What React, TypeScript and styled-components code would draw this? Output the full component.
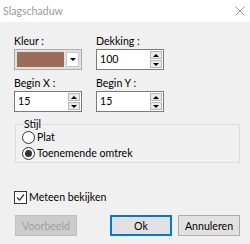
import React from "react";
import styled, { createGlobalStyle } from "styled-components";

const FS = "10.6px";

const Global = createGlobalStyle`
  html, body { margin: 0; padding: 0; background: #f0f0f0; }
  body { font-family: Lato, "Noto Sans", sans-serif; font-size: ${FS}; color: #000; }
`;

const Window = styled.div`
  width: 250px;
  height: 244px;
  background: #f0f0f0;
  display: flex;
  flex-direction: column;
  overflow: hidden;
`;

const TitleBar = styled.div`
  height: 22px;
  background: #fff;
  display: flex;
  align-items: center;
  justify-content: space-between;
  padding: 0 5px 0 3px;
  flex-shrink: 0;
`;

const Title = styled.span`
  color: #9a9a9a;
  font-size: ${FS};
  line-height: 22px;
`;

const CloseIcon = styled.svg`
  width: 10px;
  height: 10px;
`;

const Body = styled.div`
  padding: 12px 10px 0 14px;
  display: flex;
  flex-direction: column;
`;

const FieldGrid = styled.div`
  display: grid;
  grid-template-columns: 68px 68px;
  column-gap: 14px;
  row-gap: 6px;
`;

const Field = styled.div`
  display: flex;
  flex-direction: column;
`;

const Label = styled.label`
  height: 15px;
  line-height: 15px;
  font-size: ${FS};
`;

const ColorCombo = styled.div`
  height: 21px;
  box-sizing: border-box;
  border: 1px solid #adadad;
  background: #e1e1e1;
  display: flex;
  padding: 2px;
  gap: 2px;
`;

const Swatch = styled.div<{ $color: string }>`
  flex: 1;
  background: ${(p) => p.$color};
`;

const DropButton = styled.div`
  width: 11px;
  background: #fff;
  border: 1px solid #c8c8c8;
  display: flex;
  align-items: center;
  justify-content: center;
`;

const Caret = styled.div<{ $up?: boolean }>`
  width: 0;
  height: 0;
  border-left: 3px solid transparent;
  border-right: 3px solid transparent;
  ${(p) => (p.$up ? "border-bottom: 3px solid #000;" : "border-top: 3px solid #000;")}
`;

const Edit = styled.div`
  height: 21px;
  box-sizing: border-box;
  border: 1px solid #7a7a7a;
  background: #fff;
  display: flex;
  align-items: center;
  padding: 1px 1px 1px 3px;
`;

const EditText = styled.span`
  flex: 1;
  font-size: ${FS};
  line-height: 17px;
`;

const Spin = styled.div`
  width: 12px;
  height: 100%;
  display: flex;
  flex-direction: column;
  gap: 1px;
`;

const SpinBtn = styled.div`
  flex: 1;
  background: #eaeaea;
  border: 1px solid #b8b8b8;
  display: flex;
  align-items: center;
  justify-content: center;
`;

const Group = styled.fieldset`
  margin: 5px 0 0 1px;
  padding: 0 0 4px 6px;
  width: 225px;
  height: 46px;
  box-sizing: border-box;
  border: 1px solid #dcdcdc;
  border-radius: 0;
`;

const Legend = styled.legend`
  padding: 0 1px;
  margin-left: 1px;
  font-size: ${FS};
  line-height: 14px;
`;

const RadioList = styled.div`
  display: flex;
  flex-direction: column;
  margin-top: -2px;
`;

const RadioRow = styled.div`
  display: flex;
  align-items: center;
  height: 16px;
  gap: 2px;
`;

const RadioCircle = styled.div<{ $checked?: boolean }>`
  width: 11px;
  height: 11px;
  border: 1px solid #333;
  border-radius: 50%;
  display: flex;
  align-items: center;
  justify-content: center;
  background: #fff;
  &::after {
    content: "";
    display: ${(p) => (p.$checked ? "block" : "none")};
    width: 7px;
    height: 7px;
    border-radius: 50%;
    background: #333;
  }
`;

const CheckRow = styled.div`
  display: flex;
  align-items: center;
  gap: 2px;
  margin-top: 27px;
  height: 14px;
`;

const CheckBox = styled.div`
  width: 11px;
  height: 11px;
  border: 1px solid #333;
  background: #fff;
  display: flex;
  align-items: center;
  justify-content: center;
`;

const ButtonRow = styled.div`
  display: flex;
  margin-top: 11px;
  padding-left: 1px;
`;

const Button = styled.div<{ $variant?: "disabled" | "default" | "normal" }>`
  width: 62px;
  height: 21px;
  box-sizing: border-box;
  display: flex;
  align-items: center;
  justify-content: center;
  font-size: ${FS};
  background: ${(p) => (p.$variant === "disabled" ? "#cccccc" : "#e1e1e1")};
  color: ${(p) => (p.$variant === "disabled" ? "#a0a0a0" : "#000")};
  border: ${(p) =>
    p.$variant === "default"
      ? "2px solid #0078d7"
      : p.$variant === "disabled"
      ? "1px solid #bfbfbf"
      : "1px solid #adadad"};
`;

const Spacer = styled.div<{ $w: number }>`
  width: ${(p) => p.$w}px;
  flex-shrink: 0;
`;

function SpinEdit({ value }: { value: string }) {
  return (
    <Edit>
      <EditText>{value}</EditText>
      <Spin>
        <SpinBtn>
          <Caret $up />
        </SpinBtn>
        <SpinBtn>
          <Caret />
        </SpinBtn>
      </Spin>
    </Edit>
  );
}

export default function App() {
  return (
    <>
      <Global />
      <Window>
        <TitleBar>
          <Title>Slagschaduw</Title>
          <CloseIcon viewBox="0 0 10 10">
            <path d="M0.5 0.5 L9.5 9.5 M9.5 0.5 L0.5 9.5" stroke="#999" strokeWidth="1" fill="none" />
          </CloseIcon>
        </TitleBar>
        <Body>
          <FieldGrid>
            <Field>
              <Label>Kleur :</Label>
              <ColorCombo>
                <Swatch $color="#9b6c57" />
                <DropButton>
                  <Caret />
                </DropButton>
              </ColorCombo>
            </Field>
            <Field>
              <Label>Dekking :</Label>
              <SpinEdit value="100" />
            </Field>
            <Field>
              <Label>Begin X :</Label>
              <SpinEdit value="15" />
            </Field>
            <Field>
              <Label>Begin Y :</Label>
              <SpinEdit value="15" />
            </Field>
          </FieldGrid>
          <Group>
            <Legend>Stijl</Legend>
            <RadioList>
              <RadioRow>
                <RadioCircle />
                <span>Plat</span>
              </RadioRow>
              <RadioRow>
                <RadioCircle $checked />
                <span>Toenemende omtrek</span>
              </RadioRow>
            </RadioList>
          </Group>
          <CheckRow>
            <CheckBox>
              <svg width="9" height="9" viewBox="0 0 9 9">
                <path d="M1 4.5 L3.5 7 L8 1.5" stroke="#333" strokeWidth="1.2" fill="none" />
              </svg>
            </CheckBox>
            <span>Meteen bekijken</span>
          </CheckRow>
          <ButtonRow>
            <Button $variant="disabled">Voorbeeld</Button>
            <Spacer $w={33} />
            <Button $variant="default">Ok</Button>
            <Spacer $w={6} />
            <Button $variant="normal">Annuleren</Button>
          </ButtonRow>
        </Body>
      </Window>
    </>
  );
}
